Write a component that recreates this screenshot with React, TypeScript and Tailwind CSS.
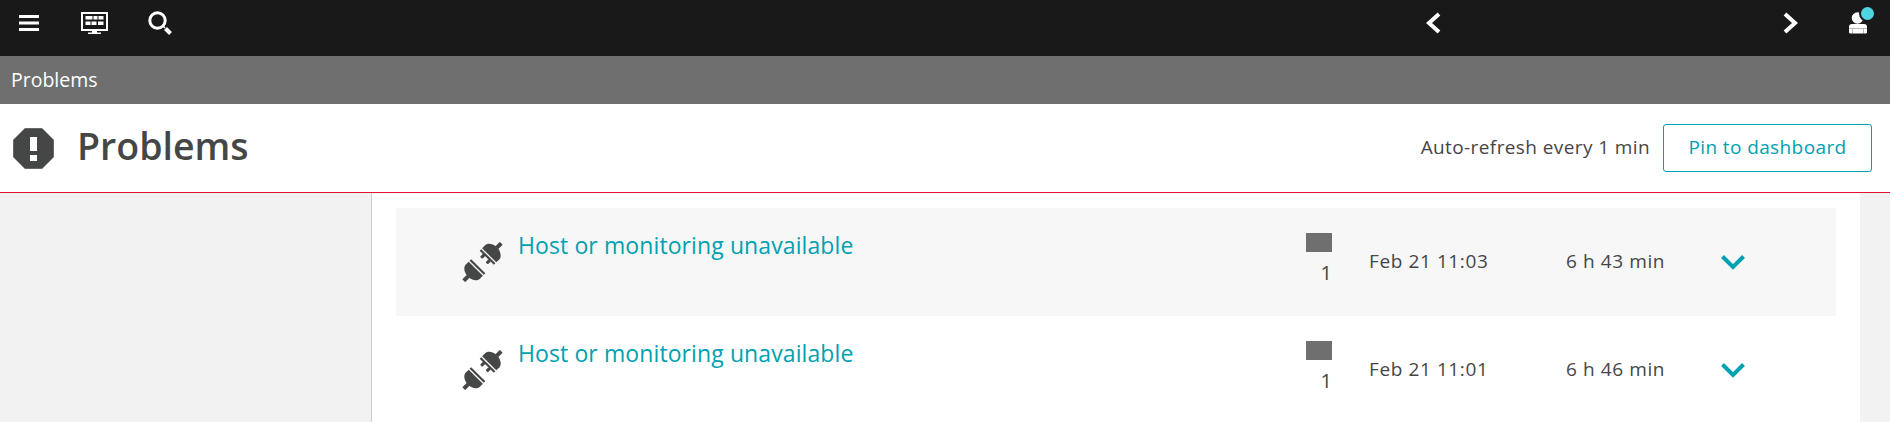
const font = { fontFamily: '"Open Sans", "Noto Sans", sans-serif' };

function PlugHalf({ prongs }: { prongs?: boolean }) {
  return (
    <>
      <path d="M9.5 -10 H14 C18 -9.5 20 -5 20.5 -2 V2 C20 5 18 9.5 14 10 H9.5 Z" />
      <rect x="20" y="-2" width="6.5" height="4" />
      <rect x="6" y="-10" width="2.2" height="20" />
      {prongs && <rect x="2" y="-5.5" width="4.5" height="3.2" rx="1" />}
      {prongs && <rect x="2" y="2.3" width="4.5" height="3.2" rx="1" />}
    </>
  );
}

function Plug() {
  return (
    <svg width="41" height="40" viewBox="0 0 41 40" className="shrink-0" fill="#454646">
      <g transform="translate(20.5 20) rotate(-45)">
        <PlugHalf prongs />
      </g>
      <g transform="translate(20.5 20) rotate(135)">
        <PlugHalf />
      </g>
    </svg>
  );
}

function Row({ date, dur, shaded }: { date: string; dur: string; shaded?: boolean }) {
  return (
    <div className={`flex h-[108px] items-start ${shaded ? 'bg-[#f7f7f7]' : 'bg-white'}`}>
      <div className="ml-[66px] mt-[34px]">
        <Plug />
      </div>
      <a className="ml-[15px] mt-[21px] w-[788px] text-[23px] leading-[32px] tracking-[0.1px] text-[#00a1b2]">Host or monitoring unavailable</a>
      <div className="mt-[25px] flex w-[26px] flex-col items-end">
        <div className="h-[19px] w-[26px] bg-[#6f6f6f]" />
        <span className="mt-[9px] text-[20px] leading-[24px] text-[#454646]">1</span>
      </div>
      <div className="ml-[37px] mt-[41px] w-[197px] text-[19px] leading-[24px] tracking-[0.6px] text-[#454646]">{date}</div>
      <div className="mt-[41px] w-[155px] text-[19px] leading-[24px] tracking-[0.6px] text-[#454646]">{dur}</div>
      <svg width="24" height="15" viewBox="0 0 24 15" className="mt-[47px]" fill="none" stroke="#00a1b2" strokeWidth="4">
        <path d="M1.5 1.5 L12 12 L22.5 1.5" />
      </svg>
    </div>
  );
}

export default function App() {
  return (
    <div className="h-[422px] w-[1890px] overflow-hidden bg-white" style={font}>
      <div className="flex h-[56px] items-start bg-[#191919]">
        <svg width="20" height="16" viewBox="0 0 20 16" className="ml-[19px] mt-[15px]" fill="#fff">
          <rect width="20" height="3" />
          <rect y="6.5" width="20" height="3" />
          <rect y="13" width="20" height="3" />
        </svg>
        <svg width="27" height="24" viewBox="0 0 27 24" className="ml-[42px] mt-[11px]" fill="#fff">
          <path fillRule="evenodd" d="M0 1h27v19H16v1.5h4V23H7v-1.5h4V20H0zM2 3v15h23V3z" />
          <rect x="4.5" y="5" width="7" height="3.5" />
          <rect x="12.5" y="5" width="4" height="3.5" />
          <rect x="17.5" y="5" width="5" height="3.5" />
          <rect x="4.5" y="10.5" width="5" height="3.5" />
          <rect x="10.5" y="10.5" width="5" height="3.5" />
          <rect x="17" y="10.5" width="5.5" height="3.5" />
        </svg>
        <svg width="25" height="25" viewBox="0 0 25 25" className="ml-[40px] mt-[11px]" fill="none" stroke="#fff">
          <circle cx="9.5" cy="9.5" r="7.7" strokeWidth="3" />
          <path d="M15 15l2 2" strokeWidth="1.5" />
          <path d="M17.5 17.5l5 5" strokeWidth="4" />
        </svg>
        <svg width="16" height="22" viewBox="0 0 16 22" className="ml-[1252px] mt-[12px]" fill="none" stroke="#fff" strokeWidth="4">
          <path d="M14 2L4 11l10 9" />
        </svg>
        <svg width="16" height="22" viewBox="0 0 16 22" className="ml-[342px] mt-[12px]" fill="none" stroke="#fff" strokeWidth="4">
          <path d="M2 2l10 9-10 9" />
        </svg>
        <div className="relative ml-[50px] mt-[12px] h-[22px] w-[18px]">
          <svg width="18" height="22" viewBox="0 0 18 22" fill="#fff">
            <circle cx="8.5" cy="6" r="5.8" />
            <path d="M3 12h12a3 3 0 0 1 3 3v5.5l-1 1H1l-1-1V15a3 3 0 0 1 3-3z" />
            <path d="M0 16h18v1H0zM3 17h1v5H3zM14 17h1v5h-1z" fill="#191919" opacity="0.3" />
          </svg>
          <span className="absolute left-[12px] top-[-5px] h-[13px] w-[13px] rounded-full bg-[#4fd5e0] ring-2 ring-[#191919]" />
        </div>
      </div>

      <div className="flex h-[48px] items-center bg-[#6f6f6f] pl-[11px] text-[19.5px] text-white">Problems</div>

      <div className="flex h-[88px] items-center bg-white pl-[13px] pr-[18px]">
        <svg width="41" height="41" viewBox="0 0 41 41" className="shrink-0">
          <path d="M12 0h17l12 12v17L29 41H12L0 29V12z" fill="#454646" stroke="#bbb" strokeWidth="0.6" />
          <rect x="17" y="9" width="7" height="14" fill="#fff" />
          <rect x="17" y="27" width="7" height="6" fill="#fff" />
        </svg>
        <h1 className="mb-[4px] ml-[23px] text-[37.5px] font-semibold leading-[44px] text-[#454646]">Problems</h1>
        <span className="mb-[2px] ml-auto text-[19px] tracking-[0.4px] text-[#454646]">Auto-refresh every 1 min</span>
        <button className="ml-[13px] h-[48px] w-[209px] rounded-[3px] border border-[#00a1b2] pb-[2px] text-[19px] tracking-[0.4px] text-[#00a1b2]">Pin to dashboard</button>
      </div>

      <div className="flex h-[230px] border-t border-[#e5122d]">
        <div className="w-[371px] bg-[#f2f2f2]" />
        <div className="flex-1 border-l border-[#cccccc] bg-white px-[24px] pt-[15px]">
          <Row date="Feb 21 11:03" dur="6 h 43 min" shaded />
          <Row date="Feb 21 11:01" dur="6 h 46 min" />
        </div>
        <div className="w-[30px] bg-[#f2f2f2]" />
      </div>
    </div>
  );
}
